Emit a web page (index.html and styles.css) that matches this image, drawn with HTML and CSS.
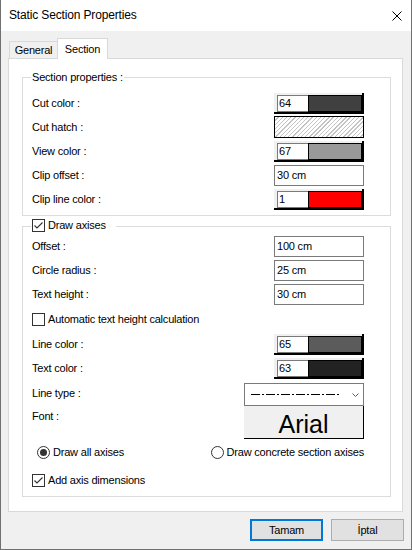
FILE: index.html
```html
<!DOCTYPE html>
<html>
<head>
<meta charset="utf-8">
<title>Static Section Properties</title>
<link rel="stylesheet" href="styles.css">
</head>
<body>
<div class="window">
  <div class="titlebar">
    <span class="title">Static Section Properties</span>
    <svg class="close" width="10" height="10" viewBox="0 0 10 10"><path d="M0.5 0.5 L9.5 9.5 M9.5 0.5 L0.5 9.5" stroke="#000" stroke-width="1" fill="none"/></svg>
  </div>
  <div class="client">
    <div class="tabs">
      <div class="tab">General</div>
      <div class="tab active">Section</div>
    </div>
    <div class="panel">
      <fieldset class="group g1">
        <legend>Section properties :</legend>
        <div class="row"><span class="lbl">Cut color :</span>
          <div class="colorpick"><span class="num">64</span><span class="swatch c64"></span></div></div>
        <div class="row"><span class="lbl">Cut hatch :</span><div class="hatch"></div></div>
        <div class="row"><span class="lbl">View color :</span>
          <div class="colorpick"><span class="num">67</span><span class="swatch c67"></span></div></div>
        <div class="row"><span class="lbl">Clip offset :</span><div class="tbox">30 cm</div></div>
        <div class="row"><span class="lbl">Clip line color :</span>
          <div class="colorpick"><span class="num">1</span><span class="swatch c1"></span></div></div>
      </fieldset>

      <fieldset class="group g2">
        <legend class="cblegend"><span class="cbx"><span class="chk"><svg width="11" height="11" viewBox="0 0 11 11"><path d="M1.5 5.5 L4 8 L9.5 2.5" stroke="#333" stroke-width="1.1" fill="none"/></svg></span>Draw axises</span></legend>
        <div class="row"><span class="lbl">Offset :</span><div class="tbox">100 cm</div></div>
        <div class="row"><span class="lbl">Circle radius :</span><div class="tbox">25 cm</div></div>
        <div class="row"><span class="lbl">Text height :</span><div class="tbox">30 cm</div></div>
        <div class="row r26"><span class="cbx"><span class="chk"></span>Automatic text height calculation</span></div>
        <div class="row"><span class="lbl">Line color :</span>
          <div class="colorpick"><span class="num">65</span><span class="swatch c65"></span></div></div>
        <div class="row r25"><span class="lbl">Text color :</span>
          <div class="colorpick"><span class="num">63</span><span class="swatch c63"></span></div></div>
        <div class="row r25"><span class="lbl">Line type :</span>
          <div class="combo">
            <svg width="88" height="3" viewBox="0 0 88 3"><line x1="0" y1="1.5" x2="88" y2="1.5" stroke="#000" stroke-width="1" stroke-dasharray="9 2 2 2"/></svg>
            <svg width="7" height="4" viewBox="0 0 7 4"><path d="M0.5 0.5 L3.5 3.5 L6.5 0.5" stroke="#606060" stroke-width="1" fill="none"/></svg>
          </div></div>
        <div class="row fontrow"><span class="lbl">Font :</span><div class="fontbtn">Arial</div></div>
        <div class="row radios">
          <span class="cbx"><svg class="radio" width="13" height="13" viewBox="0 0 13 13"><circle cx="6.5" cy="6.5" r="6" fill="#fff" stroke="#333" stroke-width="1"/><circle cx="6.5" cy="6.5" r="3.5" fill="#333"/></svg>Draw all axises</span>
          <span class="cbx"><svg class="radio" width="13" height="13" viewBox="0 0 13 13"><circle cx="6.5" cy="6.5" r="6" fill="#fff" stroke="#333" stroke-width="1"/></svg>Draw concrete section axises</span>
        </div>
        <div class="row addaxis"><span class="cbx"><span class="chk"><svg width="11" height="11" viewBox="0 0 11 11"><path d="M1.5 5.5 L4 8 L9.5 2.5" stroke="#333" stroke-width="1.1" fill="none"/></svg></span>Add axis dimensions</span></div>
      </fieldset>
    </div>
    <div class="buttons">
      <div class="btn default">Tamam</div>
      <div class="btn">İptal</div>
    </div>
  </div>
</div>
</body>
</html>
```
FILE: styles.css
```css
* { box-sizing: border-box; }
html, body { margin: 0; padding: 0; }
body {
  font-family: "Liberation Sans", Arial, sans-serif;
  font-size: 11px;
  line-height: 13px;
  letter-spacing: -0.2px;
  color: #000;
  background: #f0f0f0;
}
.window {
  width: 412px;
  height: 550px;
  border: 1px solid #707070;
  border-top: none;
  background: #f0f0f0;
  display: flex;
  flex-direction: column;
}
.titlebar {
  height: 31px;
  flex: none;
  background: #fff;
  display: flex;
  align-items: center;
  justify-content: space-between;
  padding: 0 9px 0 8px;
}
.title { font-size: 12px; letter-spacing: -0.15px; }
.close { display: block; }

.client { padding: 7px 8px 0 7px; }

.tabs {
  display: flex;
  align-items: flex-end;
  height: 20px;
  padding-left: 1px;
  position: relative;
  z-index: 1;
}
.tab {
  width: 48px;
  height: 17px;
  border: 1px solid #d9d9d9;
  border-right: none;
  border-bottom: none;
  background: #f0f0f0;
  display: flex;
  align-items: center;
  justify-content: center;
}
.tab.active {
  width: 51px;
  height: 21px;
  margin-bottom: -1px;
  border-right: 1px solid #d9d9d9;
  background: #fff;
}

.panel {
  width: 395px;
  height: 454px;
  border: 1px solid #d9d9d9;
  background: #fff;
  padding: 12px 11px 0 13px;
}

.group {
  margin: 0;
  min-width: 0;
  border: 1px solid #dcdcdc;
  padding: 7px 26px 4px 9px;
}
.group legend {
  margin-left: -1px;
  padding: 0 1px;
  line-height: 13px;
}
.group legend.cblegend { padding-right: 10px; }
.g2 { margin-top: 3px; padding-top: 0; padding-bottom: 4px; }

.row {
  display: flex;
  align-items: center;
  justify-content: space-between;
  height: 24px;
}
.row.r25 { height: 25px; }
.row.r26 { height: 26px; }
.row.r25 .combo { align-self: flex-end; }
.row.fontrow { height: 33px; align-items: flex-start; }
.row.fontrow .lbl { margin-top: 4px; }
.row.radios { margin-top: 1px; padding-left: 5px; }
.row.addaxis { margin-top: 4px; }

.cbx { display: inline-flex; align-items: center; }
.chk {
  width: 13px;
  height: 13px;
  border: 1px solid #333;
  background: #fff;
  margin-right: 3px;
  display: inline-flex;
  flex: none;
}
.chk svg { display: block; }
.radio { display: block; margin-right: 3px; flex: none; }

.colorpick {
  width: 90px;
  height: 21px;
  background: #f0f0f0;
  border-right: 2px solid #000;
  border-bottom: 2px solid #000;
  padding: 2px 0 0 3px;
  display: flex;
}
.num {
  width: 31px;
  height: 17px;
  background: #fff;
  border: 1px solid #7a7a7a;
  border-right: none;
  padding-left: 1px;
  line-height: 15px;
}
.swatch {
  width: 54px;
  height: 17px;
  border: 1px solid #000;
}
.c64 { background: #404040; }
.c67 { background: #999999; }
.c1 { background: #ff0000; }
.c65 { background: #5b5b5b; }
.c63 { background: #222222; }

.hatch {
  width: 90px;
  height: 22px;
  border: 1px solid #000;
  background: repeating-linear-gradient(135deg, #fff 0 2px, #c4c4c4 2px 3px);
}
.tbox {
  width: 90px;
  height: 21px;
  border: 1px solid #7a7a7a;
  background: #fff;
  padding-left: 2px;
  line-height: 19px;
}
.combo {
  width: 120px;
  height: 23px;
  border: 1px solid #7a7a7a;
  background: #fff;
  display: flex;
  align-items: center;
  justify-content: space-between;
  padding: 0 4px 0 6px;
}
.combo svg { display: block; }
.fontbtn {
  width: 120px;
  height: 33px;
  background: #f0f0f0;
  border-right: 1px solid #000;
  border-bottom: 1px solid #000;
  font-size: 25px;
  letter-spacing: 0;
  display: flex;
  align-items: center;
  justify-content: center;
  padding-top: 4px;
}

.buttons {
  display: flex;
  justify-content: flex-end;
  gap: 8px;
  margin-top: 7px;
  margin-right: -1px;
}
.btn {
  width: 73px;
  height: 22px;
  background: #e1e1e1;
  border: 1px solid #adadad;
  display: flex;
  align-items: center;
  justify-content: center;
}
.btn.default { border: 2px solid #0078d7; }
```
